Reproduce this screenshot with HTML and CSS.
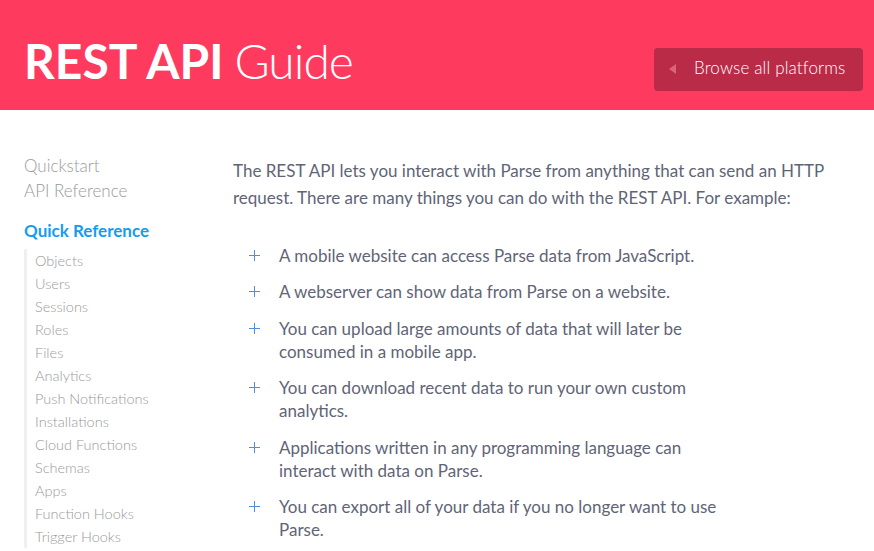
FILE: index.html
```html
<!DOCTYPE html>
<html>
<head>
<meta charset="utf-8">
<link rel="stylesheet" href="styles.css">
</head>
<body>
<header class="hero">
  <h1 class="title"><strong>REST API</strong> <span class="light">Guide</span></h1>
  <a class="browse" href="#"><span class="tri"></span>Browse all platforms</a>
</header>
<div class="page">
  <nav class="side">
    <a class="top">Quickstart</a>
    <a class="top">API Reference</a>
    <div class="section">Quick Reference</div>
    <ul class="sub">
      <li>Objects</li>
      <li>Users</li>
      <li>Sessions</li>
      <li>Roles</li>
      <li>Files</li>
      <li>Analytics</li>
      <li>Push Notifications</li>
      <li>Installations</li>
      <li>Cloud Functions</li>
      <li>Schemas</li>
      <li>Apps</li>
      <li>Function Hooks</li>
      <li>Trigger Hooks</li>
    </ul>
  </nav>
  <main class="content">
    <p class="intro">The REST API lets you interact with Parse from anything that can send an HTTP request. There are many things you can do with the REST API. For example:</p>
    <ul class="plus">
      <li>A mobile website can access Parse data from JavaScript.</li>
      <li>A webserver can show data from Parse on a website.</li>
      <li>You can upload large amounts of data that will later be consumed in a mobile app.</li>
      <li>You can download recent data to run your own custom analytics.</li>
      <li>Applications written in any programming language can interact with data on Parse.</li>
      <li>You can export all of your data if you no longer want to use Parse.</li>
    </ul>
  </main>
</div>
</body>
</html>
```
FILE: styles.css
```css
html, body {
  margin: 0;
  padding: 0;
  background: #fff;
  font-family: Lato, "Open Sans", sans-serif;
  overflow: hidden;
}
.hero {
  height: 110px;
  background: #ff3a5f;
  display: flex;
  align-items: flex-start;
  justify-content: space-between;
  padding: 0 11px 0 24px;
  box-sizing: border-box;
}
.title {
  margin: 32px 0 0;
  font-size: 48px;
  line-height: 58px;
  font-weight: 300;
  color: #fff;
}
.title strong {
  font-weight: 700;
}
.title .light {
  letter-spacing: -1px;
  margin-left: -2px;
}
.browse {
  margin-top: 48px;
  height: 43px;
  width: 209px;
  box-sizing: border-box;
  background: #b92b47;
  border-radius: 4px;
  color: #fff;
  text-decoration: none;
  font-size: 17px;
  font-weight: 300;
  letter-spacing: 0.15px;
  display: flex;
  align-items: center;
  padding: 0 0 4px 15px;
}
.tri {
  width: 0;
  height: 0;
  border-top: 5px solid transparent;
  border-bottom: 5px solid transparent;
  border-right: 7px solid #d5677c;
  margin: 3px 18px 0 0;
}
.page {
  display: flex;
  padding: 0 0 0 24px;
}
.side {
  width: 209px;
  flex: none;
  padding-top: 43px;
}
.top {
  display: block;
  font-size: 17px;
  font-weight: 300;
  color: #9a9a9a;
  line-height: 25px;
}
.section {
  margin-top: 15px;
  font-size: 17px;
  font-weight: 700;
  color: #169cee;
  line-height: 25px;
}
.sub {
  list-style: none;
  margin: 6px 0 0;
  padding: 0 0 0 8px;
  border-left: 3px solid #f0f0f0;
}
.sub li {
  font-size: 14.5px;
  font-weight: 300;
  color: #9a9a9a;
  line-height: 23px;
}
.content {
  padding-top: 47px;
  width: 620px;
}
.intro {
  margin: 0;
  font-size: 17px;
  line-height: 27px;
  color: #5f6477;
  font-weight: 400;
  width: 605px;
}
.plus {
  list-style: none;
  margin: 33px 0 0;
  padding: 0 0 0 46px;
  width: 440px;
}
.plus li {
  position: relative;
  font-size: 17px;
  line-height: 23px;
  color: #5f6477;
  margin-bottom: 13.4px;
}
.plus li::before {
  content: "";
  position: absolute;
  left: -30px;
  top: 11px;
  width: 11px;
  height: 1px;
  background: #4a90e2;
}
.plus li::after {
  content: "";
  position: absolute;
  left: -25px;
  top: 6px;
  width: 1px;
  height: 11px;
  background: #4a90e2;
}
```
